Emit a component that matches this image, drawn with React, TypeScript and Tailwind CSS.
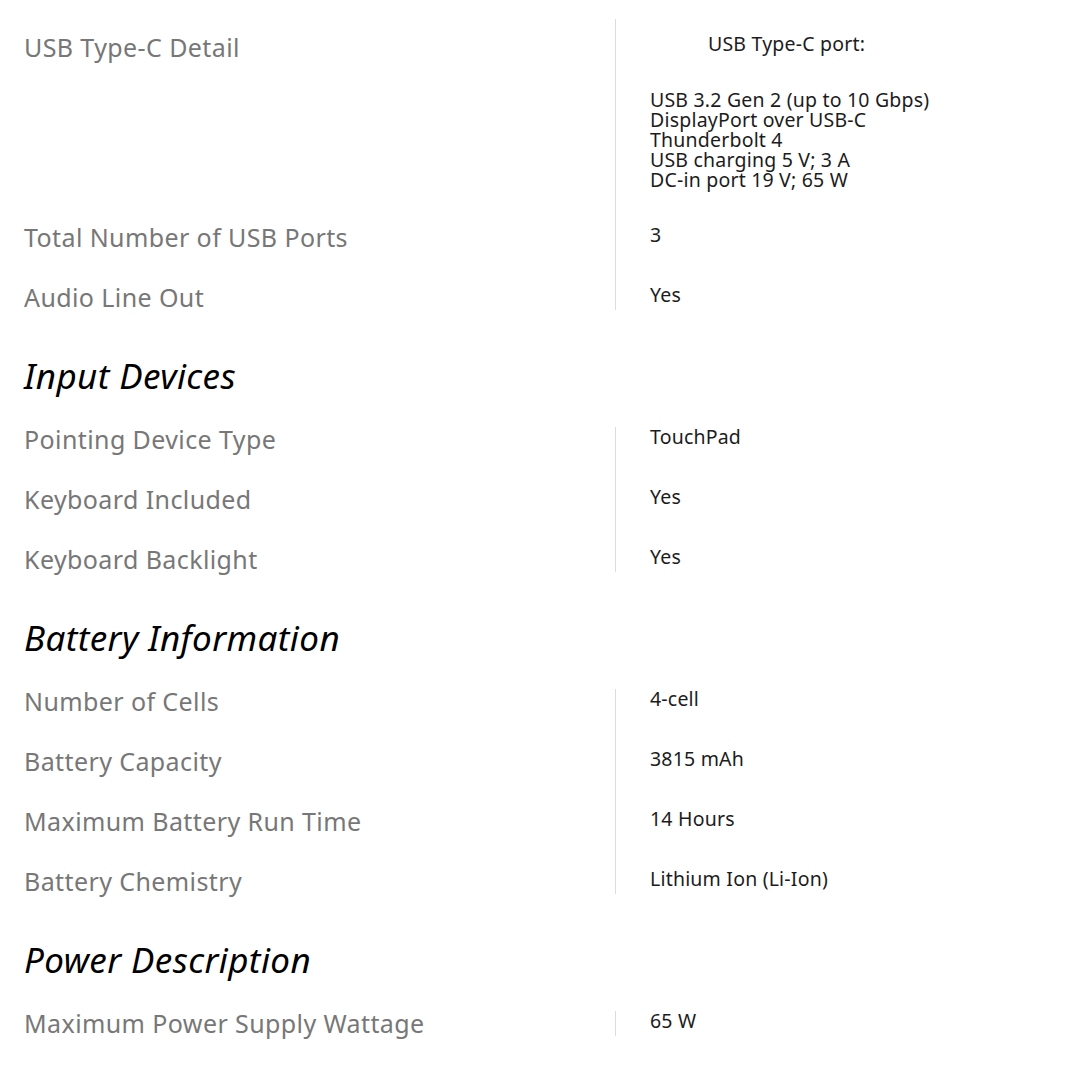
import React from 'react';

interface SpecRow {
  label: string;
  value: React.ReactNode;
  offset?: boolean;
}

interface SpecGroup {
  title?: string;
  rows: SpecRow[];
}

const usbDetail = (
  <div>
    <p className="pl-[58px]">USB Type-C port:</p>
    <p className="mt-[36px]">
      USB 3.2 Gen 2 (up to 10 Gbps)
      <br />
      DisplayPort over USB-C
      <br />
      Thunderbolt 4
      <br />
      USB charging 5 V; 3 A
      <br />
      DC-in port 19 V; 65 W
    </p>
  </div>
);

const groups: SpecGroup[] = [
  {
    rows: [
      { label: 'USB Type-C Detail', value: usbDetail, offset: true },
      { label: 'Total Number of USB Ports', value: '3' },
      { label: 'Audio Line Out', value: 'Yes' },
    ],
  },
  {
    title: 'Input Devices',
    rows: [
      { label: 'Pointing Device Type', value: 'TouchPad' },
      { label: 'Keyboard Included', value: 'Yes' },
      { label: 'Keyboard Backlight', value: 'Yes' },
    ],
  },
  {
    title: 'Battery Information',
    rows: [
      { label: 'Number of Cells', value: '4-cell' },
      { label: 'Battery Capacity', value: '3815 mAh' },
      { label: 'Maximum Battery Run Time', value: '14 Hours' },
      { label: 'Battery Chemistry', value: 'Lithium Ion (Li-Ion)' },
    ],
  },
  {
    title: 'Power Description',
    rows: [{ label: 'Maximum Power Supply Wattage', value: '65 W' }],
  },
];

const App: React.FC = () => {
  return (
    <div
      className="w-[1080px] h-[1080px] bg-white overflow-hidden pt-[19px] pl-[24px]"
      style={{ fontFamily: '"Noto Sans", "Open Sans", sans-serif' }}
    >
      {groups.map((group, gi) => (
        <section key={gi}>
          {group.title && (
            <h2 className="mt-[46px] mb-[31px] text-[35px] leading-[40px] tracking-[0.4px] italic text-black">
              {group.title}
            </h2>
          )}
          <div className="grid grid-cols-[591px_1fr]">
            <div className="flex flex-col gap-[35px]">
              {group.rows.map((row, ri) => (
                <div
                  key={ri}
                  className={`text-[25px] leading-[25px] tracking-[0.4px] text-[#777777] ${
                    row.offset ? 'pt-[16px] h-[171px]' : 'h-[25px]'
                  }`}
                >
                  {row.label}
                </div>
              ))}
            </div>
            <div className="flex flex-col gap-[35px] border-l border-[#dcdcdc] pl-[34px]">
              {group.rows.map((row, ri) => (
                <div
                  key={ri}
                  className={`text-[19.5px] leading-[20px] tracking-[0.2px] text-[#1c1c1c] ${
                    row.offset ? 'pt-[15px] h-[171px]' : 'h-[25px]'
                  }`}
                >
                  {row.value}
                </div>
              ))}
            </div>
          </div>
        </section>
      ))}
    </div>
  );
};

export default App;
